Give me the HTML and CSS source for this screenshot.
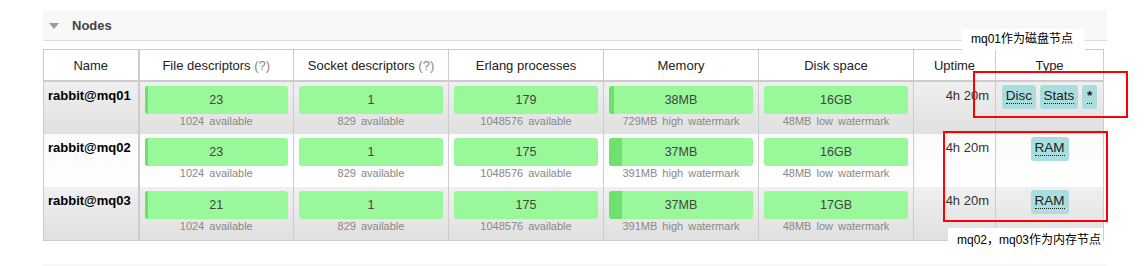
FILE: index.html
```html
<!DOCTYPE html>
<html lang="en">
<head>
    <meta charset="UTF-8">
    <title>Nodes</title>
    <link rel="stylesheet" href="styles.css">
</head>
<body>
    <div class="main">
        <div class="section">
            <h2 class="sectionTitle"><span class="arrow"></span>Nodes</h2>
            <table class="nodes">
                <colgroup>
                    <col class="cName">
                    <col class="cStat">
                    <col class="cStat">
                    <col class="cStat">
                    <col class="cStat">
                    <col class="cStat">
                    <col class="cUptime">
                    <col class="cType">
                </colgroup>
                <thead>
                    <tr>
                        <th class="name">Name</th>
                        <th>File descriptors <span class="help">(?)</span></th>
                        <th>Socket descriptors <span class="help">(?)</span></th>
                        <th>Erlang processes</th>
                        <th>Memory</th>
                        <th>Disk space</th>
                        <th>Uptime</th>
                        <th>Type</th>
                    </tr>
                </thead>
                <tbody>
                    <tr class="alt">
                        <td class="name">rabbit@mq01</td>
                        <td><div class="bar"><span class="fill" style="width:3px"></span>23</div><p class="sub">1024 available</p></td>
                        <td><div class="bar">1</div><p class="sub">829 available</p></td>
                        <td><div class="bar">179</div><p class="sub">1048576 available</p></td>
                        <td><div class="bar"><span class="fill" style="width:5px"></span>38MB</div><p class="sub">729MB high watermark</p></td>
                        <td><div class="bar">16GB</div><p class="sub">48MB low watermark</p></td>
                        <td class="uptime">4h 20m</td>
                        <td class="type"><span class="tag"><abbr>Disc</abbr></span> <span class="tag"><abbr>Stats</abbr></span> <span class="tag star"><abbr>*</abbr></span></td>
                    </tr>
                    <tr>
                        <td class="name">rabbit@mq02</td>
                        <td><div class="bar"><span class="fill" style="width:3px"></span>23</div><p class="sub">1024 available</p></td>
                        <td><div class="bar">1</div><p class="sub">829 available</p></td>
                        <td><div class="bar">175</div><p class="sub">1048576 available</p></td>
                        <td><div class="bar"><span class="fill" style="width:13px"></span>37MB</div><p class="sub">391MB high watermark</p></td>
                        <td><div class="bar">16GB</div><p class="sub">48MB low watermark</p></td>
                        <td class="uptime">4h 20m</td>
                        <td class="type"><span class="tag"><abbr>RAM</abbr></span></td>
                    </tr>
                    <tr class="alt">
                        <td class="name">rabbit@mq03</td>
                        <td><div class="bar"><span class="fill" style="width:3px"></span>21</div><p class="sub">1024 available</p></td>
                        <td><div class="bar">1</div><p class="sub">829 available</p></td>
                        <td><div class="bar">175</div><p class="sub">1048576 available</p></td>
                        <td><div class="bar"><span class="fill" style="width:13px"></span>37MB</div><p class="sub">391MB high watermark</p></td>
                        <td><div class="bar">17GB</div><p class="sub">48MB low watermark</p></td>
                        <td class="uptime">4h 20m</td>
                        <td class="type"><span class="tag"><abbr>RAM</abbr></span></td>
                    </tr>
                </tbody>
            </table>
        </div>
        <div class="section next"></div>

        <!-- 标注 -->
        <div class="mark mark1"></div>
        <div class="mark mark2"></div>
        <div class="note note1">mq01作为磁盘节点</div>
        <div class="note note2">mq02，mq03作为内存节点</div>
    </div>
</body>
</html>
```

FILE: styles.css
```css
body{
    margin: 0;
    background: #fff;
    font-family: "Liberation Sans", Arial, sans-serif;
    color: #222;
}
.main{
    position: relative;
    width: 1144px;
    height: 266px;
    padding: 10px 0 0 43px;
    box-sizing: border-box;
    overflow: hidden;
}
.section{
    width: 1064px;
}
.sectionTitle{
    margin: 0;
    height: 31px;
    line-height: 31px;
    background: #f8f8f8;
    border-bottom: 1px solid #ddd;
    box-sizing: border-box;
    font-size: 13px;
    font-weight: bold;
    color: #444;
    padding-left: 6px;
}
.arrow{
    display: inline-block;
    width: 0;
    height: 0;
    border-left: 5px solid transparent;
    border-right: 5px solid transparent;
    border-top: 6px solid #999;
    margin-right: 13px;
    vertical-align: 1px;
}
.nodes{
    margin-top: 8px;
    width: 1061px;
    table-layout: fixed;
    border-collapse: collapse;
    border: 1px solid #ccc;
    font-size: 13px;
}
.cName{ width: 95px; }
.cStat{ width: 155px; }
.cUptime{ width: 82px; }
.cType{ width: 108px; }

.nodes th{
    height: 30px;
    padding: 0;
    font-weight: normal;
    color: #222;
    background: #fff;
    border: 1px solid #ccc;
    border-bottom: 2px solid #ccc;
    text-align: center;
    white-space: nowrap;
}
.nodes th.name,.nodes td.name{
    border-right: 2px solid #ccc;
}
.help{
    color: #888;
}
.nodes td{
    height: 53px;
    padding: 4px 5px 0;
    border: 1px solid #ccc;
    border-top: 0;
    border-bottom: 0;
    vertical-align: top;
    text-align: center;
    box-sizing: border-box;
}
.nodes tbody tr{
    background: linear-gradient(#fafafa, #fff);
}
.nodes tbody tr.alt{
    background: linear-gradient(#f0f0f0, #e0e0e0);
}
.nodes td.name{
    padding: 6px 0 0 4px;
    text-align: left;
    font-weight: bold;
    color: #000;
    line-height: 16px;
}
.nodes td.uptime{
    padding: 6px 6px 0 0;
    text-align: right;
    line-height: 16px;
    color: #333;
}
.nodes td.type{
    padding: 3px 0 0;
}

.bar{
    position: relative;
    height: 28px;
    line-height: 28px;
    background: #99f899;
    border-radius: 3px;
    overflow: hidden;
    font-size: 12.5px;
    color: #444;
}
.fill{
    position: absolute;
    top: 0;
    left: 0;
    height: 100%;
    background: #6ee06e;
}
.sub{
    margin: 0;
    line-height: 14px;
    font-size: 11px;
    color: #888;
    word-spacing: 2px;
    white-space: nowrap;
}

.tag{
    display: inline-block;
    height: 24px;
    line-height: 22px;
    padding: 0 4px;
    background: #aadddd;
    border-radius: 3px;
    color: #222;
    font-size: 13.5px;
}
.tag abbr{
    text-decoration: none;
    border-bottom: 1px dotted #222;
}
.star{
    padding: 0 5px;
    font-weight: bold;
}

.next{
    margin-top: 23px;
    height: 10px;
    background: #f8f8f8;
}

/*红框和说明文字*/
.mark{
    position: absolute;
    border: 2px solid #f00;
    box-sizing: border-box;
}
.mark1{
    left: 973px;
    top: 71px;
    width: 155px;
    height: 47px;
}
.mark2{
    left: 943px;
    top: 131px;
    width: 165px;
    height: 91px;
}
.note{
    position: absolute;
    background: #fff;
    font-family: "Liberation Sans", "Noto Sans CJK SC", sans-serif;
    font-size: 12px;
    color: #000;
    line-height: 20px;
    white-space: nowrap;
}
.note1{
    left: 962px;
    top: 29px;
    width: 123px;
    height: 21px;
    padding-left: 9px;
    box-sizing: border-box;
}
.note2{
    left: 948px;
    top: 228px;
    width: 155px;
    height: 20px;
    padding-left: 9px;
    box-sizing: border-box;
    line-height: 24px;
}
```
